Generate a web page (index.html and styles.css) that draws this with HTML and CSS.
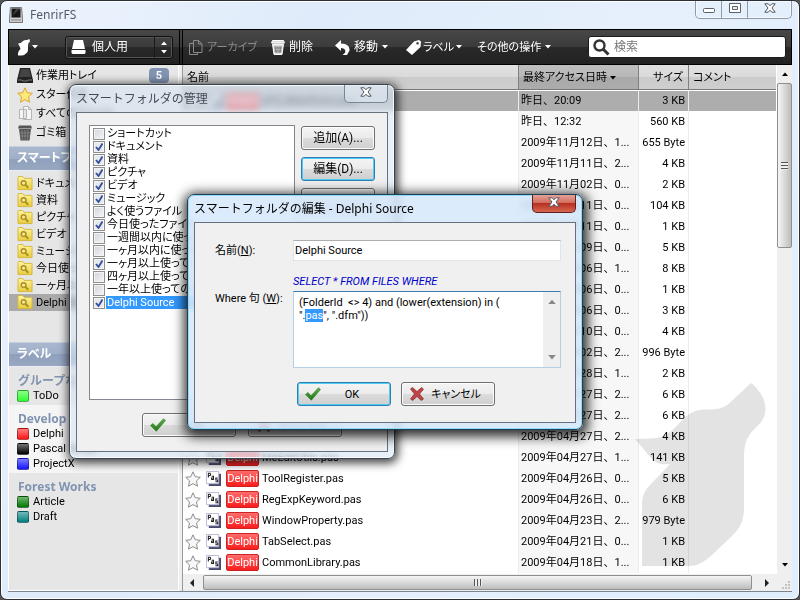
FILE: index.html
```html
<!DOCTYPE html>
<html lang="ja">
<head>
  <meta charset="UTF-8" />
  <meta name="viewport" content="width=device-width, initial-scale=1.0" />
  <title>FenrirFS</title>
  <link rel="stylesheet" href="styles.css">
</head>
<body>
  <!-- Shared icons -->
  <svg class="defs" width="0" height="0">
    <defs>
      <linearGradient id="gold" x1="0" y1="0" x2="0" y2="1"><stop offset="0" stop-color="#fff6a0"/><stop offset="1" stop-color="#e8cc3c"/></linearGradient>
      <linearGradient id="green" x1="0" y1="0" x2="0" y2="1"><stop offset="0" stop-color="#5fb24c"/><stop offset="1" stop-color="#1d7413"/></linearGradient>
    </defs>
    <symbol id="i-folder" viewBox="0 0 16 16">
      <path d="M.5 14.500V1.500q0-1 1-1h4l1.500 2h8q.5 0 .5.500v11.500z" fill="url(#gold)" stroke="#d3b53a"/>
      <circle cx="6.500" cy="7.500" r="2.500" fill="#f8ea90" stroke="#a98d25" stroke-width="1.500"/>
      <path d="M8.500 9.500l3 3" stroke="#a98d25" stroke-width="2"/>
    </symbol>
    <symbol id="i-star" viewBox="0 0 16 16">
      <path d="M8 .8l2.200 4.900 5.100.6-3.800 3.600 1 5.300L8 12.600l-4.500 2.600 1-5.300L.7 6.300l5.100-.6z" fill="#f7f7f7" stroke="#8c8c8c"/>
    </symbol>
    <symbol id="i-pas" viewBox="0 0 16 16">
      <path d="M3 3h13v13H3z" fill="#4a4a70"/>
      <path d="M.5.500h13v13H.5z" fill="#fff" stroke="#b9b9d8"/>
      <path d="M2.500 7V2.500h2q1 1.200 0 2.300h-2M6 5.500h2V9H6V7.500h2M12.500 7.500h-2v2h2v2h-2.500" fill="none" stroke="#222" stroke-width="1.100"/>
    </symbol>
    <symbol id="i-check" viewBox="0 0 16 14">
      <path d="M.5 7.500L3 5.500l3 3.200L13.500.800l2 1.700L6.300 13.300z" fill="url(#green)" stroke="#2c7c22" stroke-width=".6"/>
    </symbol>
    <symbol id="i-cross" viewBox="0 0 14 14">
      <path d="M.5 2l2-1.500L7 4.600 11.500.5l2 1.700L9.500 7l4 5-2.300 1.500L7 9.400l-4.300 4.100L.5 12l4-5z" fill="#bd4446" stroke="#8e2426" stroke-width=".7"/>
    </symbol>
    <symbol id="i-x" viewBox="0 0 12 10">
      <path d="M.8.800h3.400L6 2.800 7.800.800h3.400L8 5l3.200 4.200H7.800L6 7.200l-1.800 2H.8L4 5z" fill="#fff" stroke="#50565f"/>
    </symbol>
    <symbol id="i-down" viewBox="0 0 6 4"><path d="M0 0h6L3 3.500z" fill="currentColor"/></symbol>
    <symbol id="i-up" viewBox="0 0 6 4"><path d="M0 4h6L3 .5z" fill="currentColor"/></symbol>
  </svg>

  <!-- Main window -->
  <main class="window">
    <header class="titlebar">
      <svg width="14" height="16" viewBox="0 0 14 16"><path d="M1.500.500h11l1 11v4H.5v-4z" fill="#ccc" stroke="#777"/><path d="M2.500 1.500h9v9h-9z" fill="#151515"/><path d="M3 9l4-7h4z" fill="#3d3d3d"/><path d="M2 13h10" stroke="#888"/></svg>
      <h1>FenrirFS</h1>
      <div class="caption">
        <button aria-label="最小化"><svg width="12" height="5"><rect x=".5" y=".5" width="11" height="4" rx="1" fill="#fff" stroke="#59606b"/></svg></button>
        <button aria-label="最大化"><svg width="12" height="10"><path d="M.5.500h11v9H.5zM3.500 3.500v3h5v-3z" fill="#fff" fill-rule="evenodd" stroke="#59606b"/></svg></button>
        <button class="wide" aria-label="閉じる"><svg width="12" height="10"><use href="#i-x"/></svg></button>
      </div>
    </header>

    <div class="client">
      <div class="toolbar">
        <div class="tools-left">
          <button class="tool logo" aria-label="メニュー">
            <svg width="13" height="17" viewBox="0 0 13 17"><path d="M1 4.500q3 0 5-2.500 2-1.500 4-1L12.500 0l.5 2.500q-2 1-2 3.500v5q0 2-2 3.500-2 2-4 2H1q-.5-4 2.500-6.500l-1-3z" fill="#fff"/></svg>
            <svg width="6" height="4"><use href="#i-down"/></svg>
          </button>
          <label class="drive">
            <svg width="15" height="14" viewBox="0 0 15 14"><path d="M3 0h9l2 9H1zM.5 10h14v3l-1 1h-12l-1-1z" fill="#fff"/></svg>
            <select aria-label="プロファイル"><option>個人用</option></select>
            <span class="spin"><svg width="6" height="4"><use href="#i-up"/></svg><svg width="6" height="4"><use href="#i-down"/></svg></span>
          </label>
        </div>
        <div class="tools-right">
          <button class="tool t-archive" disabled>
            <svg width="14" height="15" viewBox="0 0 14 15"><path d="M4.500 3.500h-4v11h8v-2M4.500.500h5l3.500 3.500v8.500H4.500zM9.500.500V4H13" fill="none" stroke="currentColor"/></svg>
            <span>アーカイブ</span>
          </button>
          <button class="tool t-delete">
            <svg width="14" height="15" viewBox="0 0 14 15"><path d="M1.500.500h11l1 2.500H.5zM1.500 4h11l-1.500 10.500H3z" fill="#ddd" stroke="#fff"/><path d="M4 6l1 7M6 6v7M8 6v7M10 6l-1 7M3 8h8M3 11h8" stroke="#666" stroke-width=".7"/></svg>
            <span>削除</span>
          </button>
          <button class="tool t-move">
            <svg width="15" height="15" viewBox="0 0 15 15"><path d="M0 5.500L6 0v3.500c6 0 9 3 8.500 7L12 15H7.500c5-3 3-7-1.500-7v3z" fill="#fff"/></svg>
            <span>移動</span>
            <svg width="6" height="4"><use href="#i-down"/></svg>
          </button>
          <button class="tool t-label">
            <svg width="15" height="15" viewBox="0 0 15 15"><path d="M8 1.500l5-1.500 2 1.500-.5 5.500L6 15 0 10zM11.500 2a1.300 1.300 0 1 0 .1 0z" fill="#fff" fill-rule="evenodd"/></svg>
            <span>ラベル</span>
            <svg width="6" height="4"><use href="#i-down"/></svg>
          </button>
          <button class="tool t-other">
            <span>その他の操作</span>
            <svg width="6" height="4"><use href="#i-down"/></svg>
          </button>
          <label class="search">
            <svg width="17" height="17" viewBox="0 0 17 17"><circle cx="6.500" cy="6.500" r="5" fill="none" stroke="#333" stroke-width="2.400"/><path d="M10 10l5.500 5.500" stroke="#333" stroke-width="3"/></svg>
            <input type="search" placeholder="検索" aria-label="検索">
          </label>
        </div>
      </div>

      <div class="content">
        <nav class="sidebar">
          <div class="places">
            <a href="#tray"><svg width="16" height="15" viewBox="0 0 16 15"><path d="M3 0h10l3 12v3H0v-3z" fill="#222"/><path d="M4 1h8l2 8H2z" fill="#444"/><path d="M1 12h4l1 1h4l1-1h4" fill="none" stroke="#777"/></svg>作業用トレイ<span class="badge">5</span></a>
            <a href="#star"><svg width="16" height="16" viewBox="0 0 16 16"><path d="M8 .8l2.200 4.900 5.100.6-3.800 3.600 1 5.300L8 12.600l-4.500 2.600 1-5.300L.7 6.300l5.100-.6z" fill="#ffe87a" stroke="#d9a634"/></svg>スター付き</a>
            <a href="#all"><svg width="16" height="16" viewBox="0 0 16 16"><path d="M2.500 3.500v9h7v-9zM6.500.500h5l3 3v10h-8z" fill="#f6f6f6" stroke="#b5b5b5"/><path d="M11.500.500v3h3" fill="none" stroke="#b5b5b5"/></svg>すべてのファイル</a>
            <a href="#trash"><svg width="16" height="16" viewBox="0 0 16 16"><path d="M2 .5h12l1 3H1zM2 4h12l-1.500 11.500h-9z" fill="#555"/><path d="M5 5l.5 10M8 5v10M11 5l-.5 10M3 8h10M3 11h10" stroke="#999" stroke-width=".6"/></svg>ゴミ箱</a>
          </div>
          <h2>スマートフォルダ</h2>
          <div class="folders">
            <a href="#f1"><svg width="16" height="15"><use href="#i-folder"/></svg>ドキュメント</a>
            <a href="#f2"><svg width="16" height="15"><use href="#i-folder"/></svg>資料</a>
            <a href="#f3"><svg width="16" height="15"><use href="#i-folder"/></svg>ピクチャ</a>
            <a href="#f4"><svg width="16" height="15"><use href="#i-folder"/></svg>ビデオ</a>
            <a href="#f5"><svg width="16" height="15"><use href="#i-folder"/></svg>ミュージック</a>
            <a href="#f6"><svg width="16" height="15"><use href="#i-folder"/></svg>今日使ったファイル</a>
            <a href="#f7"><svg width="16" height="15"><use href="#i-folder"/></svg>一ヶ月以上使っていない</a>
            <a href="#f8" class="current"><svg width="16" height="15"><use href="#i-folder"/></svg>Delphi Source</a>
          </div>
          <h2>ラベル</h2>
          <div class="group">
            <h3>グループなし</h3>
            <a href="#todo"><i class="swatch lime"></i>ToDo</a>
          </div>
          <div class="group light">
            <h3>Develop</h3>
            <a href="#delphi"><i class="swatch red"></i>Delphi</a>
            <a href="#pascal"><i class="swatch black"></i>Pascal Script</a>
            <a href="#projectx"><i class="swatch blue"></i>ProjectX</a>
          </div>
          <div class="group">
            <h3>Forest Works</h3>
            <a href="#article"><i class="swatch green"></i>Article</a>
            <a href="#draft"><i class="swatch teal"></i>Draft</a>
          </div>
        </nav>

        <div class="list">
          <div class="files">
            <table>
              <colgroup><col><col class="c-date"><col class="c-size"><col class="c-comment"></colgroup>
              <thead>
                <tr><th>名前</th><th class="sorted">最終アクセス日時 <svg width="6" height="4"><use href="#i-down"/></svg></th><th class="num">サイズ</th><th>コメント</th></tr>
              </thead>
              <tbody>
                <tr class="selected"><td><div class="name"><svg width="16" height="16"><use href="#i-star"/></svg><svg width="15" height="15"><use href="#i-pas"/></svg><b class="tag">Delphi</b>uFS_MainForm.pas</div></td><td>昨日、20:09</td><td>3 KB</td><td></td></tr>
                <tr><td></td><td>昨日、12:32</td><td>560 KB</td><td></td></tr>
                <tr><td></td><td>2009年11月12日、1...</td><td>655 Byte</td><td></td></tr>
                <tr><td></td><td>2009年11月11日、2...</td><td>4 KB</td><td></td></tr>
                <tr><td></td><td>2009年11月02日、0...</td><td>2 KB</td><td></td></tr>
                <tr><td></td><td>2009年10月11日、0...</td><td>104 KB</td><td></td></tr>
                <tr><td></td><td>2009年10月11日、0...</td><td>1 KB</td><td></td></tr>
                <tr><td></td><td>2009年10月09日、0...</td><td>5 KB</td><td></td></tr>
                <tr><td></td><td>2009年10月06日、1...</td><td>8 KB</td><td></td></tr>
                <tr><td></td><td>2009年10月06日、0...</td><td>1 KB</td><td></td></tr>
                <tr><td></td><td>2009年10月06日、0...</td><td>3 KB</td><td></td></tr>
                <tr><td></td><td>2009年09月10日、0...</td><td>4 KB</td><td></td></tr>
                <tr><td></td><td>2009年09月02日、2...</td><td>996 Byte</td><td></td></tr>
                <tr><td></td><td>2009年04月28日、1...</td><td>2 KB</td><td></td></tr>
                <tr><td></td><td>2009年04月27日、2...</td><td>6 KB</td><td></td></tr>
                <tr><td></td><td>2009年04月27日、2...</td><td>6 KB</td><td></td></tr>
                <tr><td></td><td>2009年04月27日、2...</td><td>4 KB</td><td></td></tr>
                <tr><td><div class="name"><svg width="16" height="16"><use href="#i-star"/></svg><svg width="15" height="15"><use href="#i-pas"/></svg><b class="tag">Delphi</b>MeEditUtils.pas</div></td><td>2009年04月27日、1...</td><td>141 KB</td><td></td></tr>
                <tr><td><div class="name"><svg width="16" height="16"><use href="#i-star"/></svg><svg width="15" height="15"><use href="#i-pas"/></svg><b class="tag">Delphi</b>ToolRegister.pas</div></td><td>2009年04月26日、0...</td><td>5 KB</td><td></td></tr>
                <tr><td><div class="name"><svg width="16" height="16"><use href="#i-star"/></svg><svg width="15" height="15"><use href="#i-pas"/></svg><b class="tag">Delphi</b>RegExpKeyword.pas</div></td><td>2009年04月26日、0...</td><td>6 KB</td><td></td></tr>
                <tr><td><div class="name"><svg width="16" height="16"><use href="#i-star"/></svg><svg width="15" height="15"><use href="#i-pas"/></svg><b class="tag">Delphi</b>WindowProperty.pas</div></td><td>2009年04月23日、2...</td><td>979 Byte</td><td></td></tr>
                <tr><td><div class="name"><svg width="16" height="16"><use href="#i-star"/></svg><svg width="15" height="15"><use href="#i-pas"/></svg><b class="tag">Delphi</b>TabSelect.pas</div></td><td>2009年04月21日、0...</td><td>1 KB</td><td></td></tr>
                <tr><td><div class="name"><svg width="16" height="16"><use href="#i-star"/></svg><svg width="15" height="15"><use href="#i-pas"/></svg><b class="tag">Delphi</b>CommonLibrary.pas</div></td><td>2009年04月18日、1...</td><td>1 KB</td><td></td></tr>
              </tbody>
            </table>
            <!-- Fenrir watermark -->
            <svg class="watermark" width="131" height="184" viewBox="635 383 131 184">
              <path d="M635 439l16-.5c10 0 17-4 22-9l12-12c7-6 12-8 22-8 10 0 16-1 22-6l22-20.500c10 8 14 17 14.500 25 0 8-3 13-7 17-12 11-14.500 18-14.500 35v48c0 14-5 21-12 28l-20 19c-9 8-15 11-24 11h-46v-61c0-9 3-15 8-20l20-21c-8 1-14 0-19-6z" fill="#e3e3e3"/>
            </svg>
          </div>
          <div class="vbar">
            <svg width="6" height="4"><use href="#i-up"/></svg>
            <span class="thumb"><i class="grip"></i></span>
            <svg width="6" height="4"><use href="#i-down"/></svg>
          </div>
          <div class="hbar">
            <svg width="4" height="8"><path d="M4 0v8L0 4z" fill="#222"/></svg>
            <span class="thumb"><i class="grip"></i></span>
            <svg width="4" height="8"><path d="M0 0v8l4-4z" fill="#222"/></svg>
          </div>
          <div class="corner"><svg width="8" height="8"><path d="M6 0h2v2H6zM3 3h2v2H3zM6 3h2v2H6zM0 6h2v2H0zM3 6h2v2H3zM6 6h2v2H6z" fill="#c2c2c2"/></svg></div>
        </div>
      </div>
    </div>
  </main>

  <!-- Smart folder manager -->
  <section class="dialog manager">
    <header>
      <h2>スマートフォルダの管理</h2>
      <button class="close" aria-label="閉じる"><svg width="12" height="10"><use href="#i-x"/></svg></button>
    </header>
    <div class="panel">
      <div class="manager-main">
        <div class="checklist">
          <label><input type="checkbox"><span>ショートカット</span></label>
          <label><input type="checkbox" checked><span>ドキュメント</span></label>
          <label><input type="checkbox" checked><span>資料</span></label>
          <label><input type="checkbox" checked><span>ピクチャ</span></label>
          <label><input type="checkbox" checked><span>ビデオ</span></label>
          <label><input type="checkbox" checked><span>ミュージック</span></label>
          <label><input type="checkbox"><span>よく使うファイル</span></label>
          <label><input type="checkbox" checked><span>今日使ったファイル</span></label>
          <label><input type="checkbox"><span>一週間以内に使った</span></label>
          <label><input type="checkbox"><span>一ヶ月以内に使った</span></label>
          <label><input type="checkbox" checked><span>一ヶ月以上使っていない</span></label>
          <label><input type="checkbox"><span>四ヶ月以上使っていない</span></label>
          <label><input type="checkbox"><span>一年以上使ってのない</span></label>
          <label class="picked"><input type="checkbox" checked><span>Delphi Source</span></label>
        </div>
        <div class="side-buttons">
          <button class="btn">追加(A)...</button>
          <button class="btn default">編集(D)...</button>
          <button class="btn" aria-label="削除"></button>
        </div>
      </div>
      <div class="actions">
        <button class="btn"><svg width="16" height="14"><use href="#i-check"/></svg><span>OK</span></button>
        <button class="btn"><svg width="16" height="14"><use href="#i-cross"/></svg><span>キャンセル</span></button>
      </div>
    </div>
  </section>

  <!-- Smart folder editor -->
  <section class="dialog editor">
    <header>
      <h2>スマートフォルダの編集 - Delphi Source</h2>
      <button class="close" aria-label="閉じる"><svg width="12" height="10"><use href="#i-x"/></svg></button>
    </header>
    <div class="panel">
      <div class="form">
        <label for="folderName">名前(<u>N</u>):</label>
        <input type="text" id="folderName" value="Delphi Source">
        <em class="sql">SELECT * FROM FILES WHERE</em>
        <label for="where" class="where-label">Where 句 (<u>W</u>):</label>
        <div class="where">
          <textarea id="where" spellcheck="false">(FolderId  &lt;&gt; 4) and (lower(extension) in (
".pas", ".dfm"))</textarea>
          <div class="mini-bar"><svg width="8" height="5"><use href="#i-up"/></svg><svg width="8" height="5"><use href="#i-down"/></svg></div>
        </div>
      </div>
      <div class="actions">
        <button class="btn default"><svg width="16" height="14"><use href="#i-check"/></svg><span>OK</span></button>
        <button class="btn"><svg width="16" height="14"><use href="#i-cross"/></svg><span>キャンセル</span></button>
      </div>
    </div>
  </section>

  <script>
    // Select the extension that is being edited
    window.onload = function () {
      const where = document.getElementById("where");
      const start = where.value.indexOf("pas");
      where.focus();
      where.setSelectionRange(start, start + 3);
    };
  </script>
</body>
</html>
```
FILE: styles.css
```css
* {
  box-sizing: border-box;
}
body {
  margin: 0;
  height: 100vh;
  overflow: hidden;
  position: relative;
  background: #555;
  font: 11px/15px Roboto, "Noto Sans CJK JP", sans-serif;
  font-feature-settings: "palt";
  color: #000;
}
.defs {
  position: absolute;
}
svg {
  flex: none;
}
button, input, select, textarea {
  font: inherit;
  font-feature-settings: inherit;
  color: inherit;
  margin: 0;
}
button {
  padding: 0;
  border: none;
  background: none;
}
a {
  color: inherit;
  text-decoration: none;
}
h1, h2, h3 {
  margin: 0;
  font-weight: normal;
}

/* Main window */
.window {
  height: 100vh;
  display: flex;
  flex-direction: column;
  padding: 0 7px 7px;
  border: 1px solid #2b3038;
  border-radius: 7px;
  background: linear-gradient(115deg, #edf4fd, #dfebfa 30%, #e6f0fc 60%, #dfedfc);
  box-shadow: inset 0 0 0 1px #fff;
}
.titlebar {
  display: flex;
  height: 28px;
  align-items: center;
  gap: 7px;
  padding-left: 1px;
}
.titlebar h1 {
  font: 12px/16px "Noto Sans", sans-serif;
  color: #555b66;
}
.caption {
  margin-left: auto;
  align-self: flex-start;
  display: flex;
  height: 18px;
  border: 1px solid #8e99a9;
  border-top: none;
  border-radius: 0 0 5px 5px;
  box-shadow: inset 0 0 0 1px #f6faff;
}
.caption button {
  width: 26px;
  border-right: 1px solid #8e99a9;
}
.caption .wide {
  width: 43px;
  border-right: none;
}
.client {
  flex: 1;
  min-height: 0;
  display: flex;
  flex-direction: column;
  border-bottom: 1px solid #7c8490;
  background: #eee;
}

/* Toolbar */
.toolbar {
  height: 36px;
  flex: none;
  display: flex;
  border: 1px solid #000;
  background: linear-gradient(#474747, #3b3b3b 50%, #292929 50%, #222);
  color: #fff;
}
.tools-left {
  width: 171px;
  display: flex;
  align-items: center;
  justify-content: space-between;
  padding: 0 6px 0 8px;
  border-right: 1px solid #000;
}
.tools-right {
  flex: 1;
  display: flex;
  align-items: center;
  margin-left: 2px;
  padding: 0 5px 0 6px;
  border-left: 1px solid #000;
}
.tool {
  display: flex;
  align-items: center;
  gap: 4px;
}
.tool:disabled {
  color: #8b8b8b;
}
.logo {
  gap: 2px;
}
.t-archive {
  width: 82px;
}
.t-delete {
  width: 64px;
}
.t-delete span, .t-move span {
  font-size: 12px;
}
.t-move, .t-label {
  width: 71px;
}
.t-label {
  gap: 2px;
}
.t-other {
  width: 111px;
}
.drive {
  width: 108px;
  height: 23px;
  display: flex;
  align-items: center;
  gap: 6px;
  padding-left: 5px;
  border: 1px solid #111;
  border-radius: 3px;
  box-shadow: inset 0 0 0 1px #555;
}
.drive select {
  flex: 1;
  min-width: 0;
  appearance: none;
  border: none;
  background: none;
  padding: 0;
  font-size: 12px;
}
.spin {
  width: 18px;
  height: 21px;
  display: flex;
  flex-direction: column;
  align-items: center;
  justify-content: center;
  gap: 5px;
  border-left: 1px solid #1a1a1a;
}
.search {
  flex: 1;
  height: 22px;
  display: flex;
  align-items: center;
  gap: 4px;
  padding: 0 4px;
  border: 1px solid #1b1b1b;
  border-radius: 3px;
  background: #fff;
}
.search input {
  flex: 1;
  min-width: 0;
  border: none;
  padding: 0;
  outline: none;
  font-size: 12px;
}
.search input::placeholder {
  color: #777;
}

/* Sidebar */
.content {
  flex: 1;
  min-height: 0;
  display: flex;
}
.sidebar {
  width: 171px;
  flex: none;
  border: 1px solid #fff;
  border-top: none;
  background: #e6e6e6;
  white-space: nowrap;
  overflow: hidden;
}
.sidebar a {
  display: flex;
  align-items: center;
  gap: 3px;
  padding-left: 8px;
}
.places {
  height: 81px;
  padding-top: 1px;
}
.places a {
  height: 19px;
}
.badge {
  width: 20px;
  margin-left: auto;
  margin-right: 9px;
  border-radius: 4px;
  background: #8294b3;
  color: #fff;
  font-weight: bold;
  text-align: center;
}
.sidebar h2 {
  height: 25px;
  padding-left: 8px;
  border-top: 1px solid #c5cfdf;
  border-bottom: 1px solid #e9eef5;
  background: linear-gradient(#aab8cf, #9fafc8 50%, #8fa0bd 50%, #98a8c2);
  color: #fff;
  font-size: 12px;
  font-weight: bold;
  line-height: 23px;
}
.folders {
  height: 171px;
  padding-top: 4px;
}
.folders a {
  height: 17px;
}
.folders .current {
  background: #aaa;
}
.group {
  padding: 6px 0 2px;
}
.group.light {
  background: #f5f5f5;
}
.group h3 {
  padding-left: 9px;
  font: bold 12px/15px "Noto Sans", "Noto Sans CJK JP", sans-serif;
  color: #8093b0;
}
.group a {
  height: 15px;
  gap: 4px;
}
.swatch {
  width: 12px;
  height: 12px;
  border: 1px solid rgba(0, 0, 0, 0.35);
  border-radius: 2px;
  background-image: linear-gradient(rgba(255, 255, 255, 0.45), rgba(255, 255, 255, 0));
}
.lime { background-color: #2fff2f; }
.red { background-color: #ff1414; }
.black { background-color: #000; }
.blue { background-color: #1414ff; }
.green { background-color: #007a00; }
.teal { background-color: #008080; }

/* File list */
.list {
  flex: 1;
  min-width: 0;
  display: grid;
  grid-template-columns: minmax(0, 1fr) 16px;
  grid-template-rows: minmax(0, 1fr) 17px;
  margin-left: 3px;
  border-left: 1px solid #999;
}
.files {
  position: relative;
  background: #fff;
}
table {
  width: 100%;
  table-layout: fixed;
  border-collapse: separate;
  border-spacing: 0;
  white-space: nowrap;
}
.c-date { width: 120px; }
.c-size { width: 50px; }
.c-comment { width: 87px; }
th {
  height: 25px;
  padding: 0 4px;
  border-right: 1px solid #808080;
  border-bottom: 1px solid #777;
  background: linear-gradient(#e0e0e0, #dadada 50%, #cbcbcb 50%, #cecece);
  font-weight: normal;
  text-align: left;
}
th:last-child {
  border-right: none;
}
th svg {
  vertical-align: middle;
}
th.sorted {
  background: linear-gradient(#bebebe, #b8b8b8 50%, #a9a9a9 50%, #acacac);
}
th.num {
  padding-right: 5px;
  text-align: right;
}
td {
  height: 21px;
  padding: 0 3px 0 2px;
  border-right: 1px solid #ececec;
  line-height: 20px;
  font-feature-settings: normal;
}
td:nth-child(2) {
  background: #f7f7f7;
}
td:nth-child(3) {
  text-align: right;
}
td:last-child {
  border-right: none;
}
.selected td {
  border-top: 1px solid #fff;
  background: #adadad;
}
.name {
  display: flex;
  align-items: center;
  gap: 5px;
}
.tag {
  width: 33px;
  margin-right: -2px;
  height: 17px;
  border: 1px solid #c22;
  border-radius: 2px;
  background: linear-gradient(#ff6d6d, #fa1d1d);
  color: #fff;
  font-weight: normal;
  line-height: 15px;
  text-align: center;
}
.watermark {
  position: absolute;
  right: 10px;
  bottom: 7px;
  mix-blend-mode: multiply;
}

/* Scrollbars */
.vbar, .hbar, .corner, .mini-bar {
  display: flex;
  align-items: center;
  background: #efefef;
}
.vbar {
  flex-direction: column;
  padding: 7px 0;
  border-left: 1px solid #fff;
}
.vbar .thumb {
  width: 15px;
  height: 165px;
  margin: 7px 0 auto;
  background: linear-gradient(90deg, #f6f6f6, #d9d9d9 50%, #bdbdbd);
}
.thumb {
  display: flex;
  align-items: center;
  justify-content: center;
  border: 1px solid #8f8f8f;
  border-radius: 2px;
}
.vbar .grip {
  width: 7px;
  height: 8px;
  background: repeating-linear-gradient(#555 0 1px, #eee 1px 3px);
}
.hbar {
  padding: 0 7px;
}
.hbar .thumb {
  flex: 1;
  height: 15px;
  margin: 0 13px 0 9px;
  background: linear-gradient(#f6f6f6, #d9d9d9 50%, #bdbdbd);
}
.hbar .grip {
  width: 8px;
  height: 7px;
  background: repeating-linear-gradient(90deg, #555 0 1px, #eee 1px 3px);
}
.corner {
  align-items: flex-end;
  justify-content: flex-end;
  padding: 2px;
}

/* Dialogs */
.dialog {
  position: absolute;
  display: flex;
  flex-direction: column;
  padding: 0 6px 6px;
  border: 1px solid #3a4450;
  border-radius: 7px;
  background: rgba(215, 228, 244, 0.6);
  backdrop-filter: blur(3px);
  box-shadow: inset 0 0 0 1px rgba(255, 255, 255, 0.8), 1px 2px 10px 2px rgba(0, 0, 0, 0.75);
}
.dialog header {
  height: 27px;
  flex: none;
  display: flex;
  align-items: center;
  justify-content: space-between;
}
.dialog h2 {
  font: 12px/16px "Noto Sans", "Noto Sans CJK JP", sans-serif;
  font-feature-settings: normal;
  color: #444a55;
}
.editor h2 {
  color: #000;
}
.close {
  width: 44px;
  height: 18px;
  align-self: flex-start;
  border: 1px solid #7b8492;
  border-top: none;
  border-radius: 0 0 5px 5px;
  background: rgba(225, 232, 242, 0.6);
}
.editor .close {
  border-color: #5c2222;
  background: linear-gradient(#e5a297, #d16a5a 48%, #b83022 50%, #d8664e);
}
.panel {
  flex: 1;
  display: flex;
  flex-direction: column;
  border: 1px solid #66707e;
  background: #f0f0f0;
}
.btn {
  height: 24px;
  display: flex;
  align-items: center;
  justify-content: center;
  border: 1px solid #707070;
  border-radius: 3px;
  background: linear-gradient(#f4f4f4, #ebebeb 50%, #dcdcdc 50%, #cfcfcf);
  box-shadow: inset 0 0 0 1px #fcfcfc;
}
.btn.default {
  border-color: #2f7fb0;
  box-shadow: inset 0 0 0 1px #52cbf4;
}
.actions {
  display: flex;
  justify-content: center;
}
.actions .btn {
  width: 94px;
  padding: 0 7px;
}
.actions .btn span {
  flex: 1;
}

.manager {
  left: 69px;
  top: 84px;
  width: 326px;
}
.manager .panel {
  padding: 12px 12px 14px;
  gap: 13px;
}
.manager-main {
  display: flex;
  gap: 6px;
}
.checklist {
  flex: 1;
  min-width: 0;
  height: 275px;
  padding: 1px 0 0 3px;
  border: 1px solid #828790;
  background: #fff;
  overflow: hidden;
}
.checklist label {
  height: 13px;
  display: flex;
  align-items: center;
  gap: 1px;
  line-height: 13px;
  white-space: nowrap;
}
.checklist span {
  flex: 1;
  padding-left: 1px;
}
.picked span {
  background: #3399ff;
  color: #fff;
}
.checklist input {
  appearance: none;
  width: 12px;
  height: 12px;
  flex: none;
  border: 1px solid #8e8f8f;
  background: linear-gradient(135deg, #d0d4da, #f6f6f6);
  box-shadow: inset 0 0 0 1px #f4f4f4;
}
.checklist input:checked {
  background: url("data:image/svg+xml,%3Csvg xmlns='http://www.w3.org/2000/svg' viewBox='0 0 10 10'%3E%3Cpath d='M2 5l2.500 3L8.500 1.500' fill='none' stroke='%23354f9c' stroke-width='1.900'/%3E%3C/svg%3E") center / 10px 10px no-repeat #e6e9ee;
}
.side-buttons {
  width: 74px;
  display: flex;
  flex-direction: column;
  gap: 7px;
  padding-top: 1px;
}
.side-buttons .btn {
  font-size: 12px;
}
.manager .actions {
  gap: 12px;
  padding-left: 20px;
}

.editor {
  left: 187px;
  top: 194px;
  width: 396px;
  border-color: #1f3f58;
  background: rgba(214, 231, 250, 0.85);
  box-shadow: inset 0 0 0 1px #8fdcf5, 1px 3px 12px 4px rgba(0, 0, 0, 0.8);
}
.editor .panel {
  padding: 17px 14px 16px 20px;
  gap: 14px;
}
.form {
  display: grid;
  grid-template-columns: 72px 1fr;
  column-gap: 6px;
  align-items: center;
}
.form input {
  height: 21px;
  padding: 0 1px;
  border: 1px solid #dfe3ea;
  border-top-color: #abadb3;
  background: #fff;
  outline: none;
}
.sql {
  grid-column: 2;
  margin-top: 12px;
  line-height: 18px;
  color: #00c;
}
.where-label {
  align-self: start;
}
.where {
  height: 77px;
  display: flex;
  border: 1px solid #b5cfe7;
  border-top-color: #3d7bad;
  background: #fff;
}
.where textarea {
  flex: 1;
  min-width: 0;
  padding: 4px 5px;
  border: none;
  outline: none;
  resize: none;
  overflow: hidden;
  background: none;
  line-height: 13px;
}
.where textarea::selection {
  background: #3399ff;
  color: #fff;
}
.mini-bar {
  width: 17px;
  flex-direction: column;
  justify-content: space-between;
  padding: 7px 0;
  color: #888;
}
.editor .actions {
  gap: 10px;
  padding-left: 16px;
}
```
